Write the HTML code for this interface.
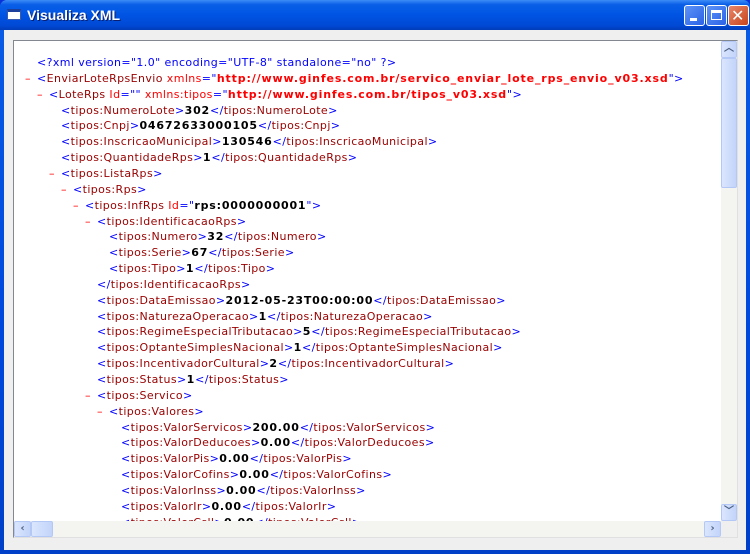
<!DOCTYPE html>
<html><head><meta charset="utf-8"><style>
*{margin:0;padding:0;box-sizing:border-box}
body{width:750px;height:554px;overflow:hidden;background:#0831d9;font-family:"DejaVu Sans","Liberation Sans",sans-serif}
.win{position:absolute;left:0;top:0;width:750px;height:554px;background:linear-gradient(#0a5ce6,#0048dc 60%,#0040c8);border-radius:7px 7px 0 0}
.title{position:absolute;left:0;top:0;width:750px;height:30px;background:linear-gradient(#3d8cf5 0%,#0a5fe8 15%,#0054e3 50%,#0049d4 85%,#003cb8 100%);border-radius:7px 7px 0 0}
.title .t{position:absolute;left:27px;top:7px;color:#fff;font:bold 14px "Liberation Sans",sans-serif;text-shadow:1px 1px #0a1e6e}
.ico{position:absolute;left:7px;top:9px;width:14px;height:11px;background:#fff;border:1px solid #3a5bb0;border-top:3px solid #1c3f9c}
.btn{position:absolute;top:5px;width:21px;height:21px;border:1px solid #fff;border-radius:3px;background:linear-gradient(135deg,#5d93f7,#2a62e6);}
.client{position:absolute;left:4px;top:30px;width:742px;height:520px;background:#efefef}
.box{position:absolute;left:9px;top:10px;width:725px;height:498px;background:#fff;border:1px solid #828790;border-right-color:#e0e0e0;border-bottom-color:#e0e0e0;overflow:hidden}
.l{position:absolute;white-space:pre;font-size:11px;letter-spacing:0.4px;line-height:16px;color:#000}
.b{color:#0000ff}.n{color:#990000}.a{color:#ff0000}.v{color:#ff0000;font-weight:bold;letter-spacing:0.85px}.x{font-weight:bold;color:#000;letter-spacing:0.8px}.m{color:#ff0000;position:absolute}
.vs{position:absolute;left:707px;top:0;width:17px;height:480px;background:#f4f4f0}
.hs{position:absolute;left:0;top:480px;width:707px;height:17px;background:#f4f4f0}
.sb{position:absolute;width:16px;height:16px;border:1px solid #b4c8f6;border-radius:2px;background:linear-gradient(90deg,#dbe6fd,#c2d4fa);color:#4d6185;font-size:10px;text-align:center;line-height:14px;font-weight:bold}
</style></head><body>
<div class="win">
<div class="title"><div class="ico"></div><div class="t">Visualiza XML</div>
<div class="btn" style="left:684px"><div style="position:absolute;left:5px;top:12px;width:7px;height:3px;background:#fff"></div></div>
<div class="btn" style="left:706px"><div style="position:absolute;left:4px;top:4px;width:11px;height:10px;border:1px solid #fff;border-top-width:3px"></div></div>
<div class="btn" style="left:728px;background:linear-gradient(135deg,#e8876a,#c8441c)"><div style="position:absolute;left:2px;top:0px;color:#fff;font:bold 16px 'DejaVu Sans',sans-serif">✕</div></div>
</div>
<div class="client"><div class="box">
<div id="c"></div>
<div class="vs"><div class="sb" style="left:0;top:0;height:17px">︿</div><div class="sb" style="left:0;top:17px;height:130px"></div><div class="sb" style="left:0;top:463px;height:17px">﹀</div></div>
<div class="hs"><div class="sb" style="left:0;top:0;width:17px">‹</div><div class="sb" style="left:17px;top:0;width:22px"></div><div class="sb" style="left:690px;top:0;width:17px">›</div></div>
<div style="position:absolute;left:707px;top:480px;width:17px;height:17px;background:#efefef"></div>
</div></div>
</div>
<script>
var L=[
[0,0,'<span class="b">&lt;?xml version="1.0" encoding="UTF-8" standalone="no" ?&gt;</span>'],
[0,1,'<span class="b">&lt;</span><span class="n">EnviarLoteRpsEnvio</span><span class="a"> xmlns</span><span class="b">="</span><span class="v">http://www.ginfes.com.br/servico_enviar_lote_rps_envio_v03.xsd</span><span class="b">"&gt;</span>'],
[1,1,'<span class="b">&lt;</span><span class="n">LoteRps</span><span class="a"> Id</span><span class="b">=""</span><span class="a"> xmlns:tipos</span><span class="b">="</span><span class="v">http://www.ginfes.com.br/tipos_v03.xsd</span><span class="b">"&gt;</span>'],
[2,0,'T:NumeroLote|302'],[2,0,'T:Cnpj|04672633000105'],[2,0,'T:InscricaoMunicipal|130546'],[2,0,'T:QuantidadeRps|1'],
[2,1,'O:tipos:ListaRps'],[3,1,'O:tipos:Rps'],
[4,1,'<span class="b">&lt;</span><span class="n">tipos:InfRps</span><span class="a"> Id</span><span class="b">="</span><span class="x">rps:0000000001</span><span class="b">"&gt;</span>'],
[5,1,'O:tipos:IdentificacaoRps'],[6,0,'T:Numero|32'],[6,0,'T:Serie|67'],[6,0,'T:Tipo|1'],
[5,0,'C:tipos:IdentificacaoRps'],
[5,0,'T:DataEmissao|2012-05-23T00:00:00'],[5,0,'T:NaturezaOperacao|1'],[5,0,'T:RegimeEspecialTributacao|5'],[5,0,'T:OptanteSimplesNacional|1'],[5,0,'T:IncentivadorCultural|2'],[5,0,'T:Status|1'],
[5,1,'O:tipos:Servico'],[6,1,'O:tipos:Valores'],
[7,0,'T:ValorServicos|200.00'],[7,0,'T:ValorDeducoes|0.00'],[7,0,'T:ValorPis|0.00'],[7,0,'T:ValorCofins|0.00'],[7,0,'T:ValorInss|0.00'],[7,0,'T:ValorIr|0.00'],[7,0,'T:ValorCsll|0.00']
];
var h='';
L.forEach(function(r,i){
 var s=r[2],x=23+12*r[0],y=14+i*15.85;
 if(s.indexOf('T:')==0){var p=s.slice(2).split('|');s='<span class="b">&lt;</span><span class="n">tipos:'+p[0]+'</span><span class="b">&gt;</span><span class="x">'+p[1]+'</span><span class="b">&lt;/</span><span class="n">tipos:'+p[0]+'</span><span class="b">&gt;</span>';}
 else if(s.indexOf('O:')==0){s='<span class="b">&lt;</span><span class="n">'+s.slice(2)+'</span><span class="b">&gt;</span>';}
 else if(s.indexOf('C:')==0){s='<span class="b">&lt;/</span><span class="n">'+s.slice(2)+'</span><span class="b">&gt;</span>';}
 h+='<div class="l" style="left:'+x+'px;top:'+y+'px">'+(r[1]?'<span class="m" style="left:-12px">–</span>':'')+s+'</div>';
});
document.getElementById('c').innerHTML=h;
</script>
</body></html>
